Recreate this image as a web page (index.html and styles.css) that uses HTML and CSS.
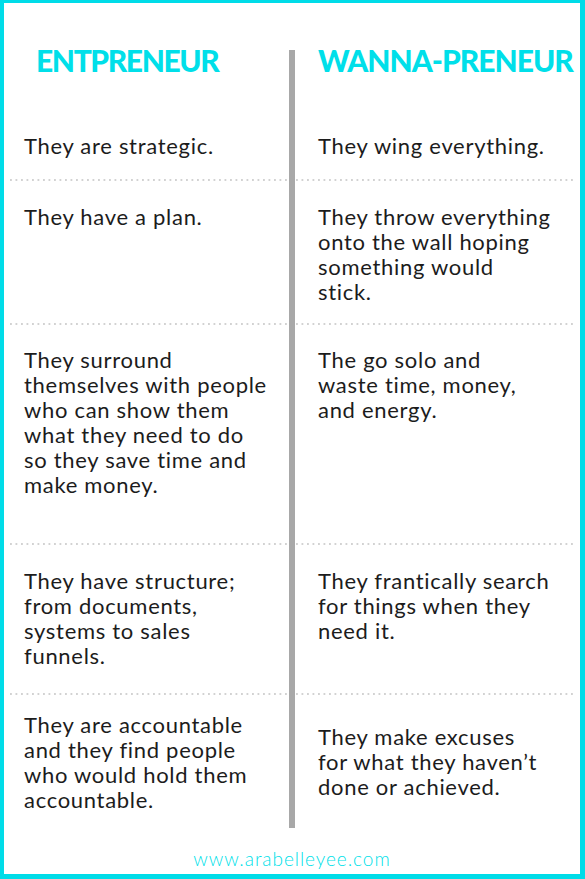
FILE: index.html
```html
<!DOCTYPE html>
<html lang="en">
<head>
<meta charset="utf-8">
<title>Entrepreneur vs Wanna-preneur</title>
<link rel="stylesheet" href="styles.css">
</head>
<body>
<main class="sheet">
  <div class="table">
    <h2 class="heading heading--left">ENTPRENEUR</h2>
    <div class="bar"></div>
    <h2 class="heading heading--right">WANNA-PRENEUR</h2>

    <p class="cell cell--left row1">They are strategic.</p>
    <p class="cell cell--right row1">They wing everything.</p>
    <div class="sep sep1"></div>

    <p class="cell cell--left row2">They have a plan.</p>
    <p class="cell cell--right row2">They throw everything<br>onto the wall hoping<br>something would<br>stick.</p>
    <div class="sep sep2"></div>

    <p class="cell cell--left row3">They surround<br>themselves with people<br>who can show them<br>what they need to do<br>so they save time and<br>make money.</p>
    <p class="cell cell--right row3">The go solo and<br>waste time, money,<br>and energy.</p>
    <div class="sep sep3"></div>

    <p class="cell cell--left row4">They have structure;<br>from documents,<br>systems to sales<br>funnels.</p>
    <p class="cell cell--right row4">They frantically search<br>for things when they<br>need it.</p>
    <div class="sep sep4"></div>

    <p class="cell cell--left row5">They are accountable<br>and they find people<br>who would hold them<br>accountable.</p>
    <p class="cell cell--right row5">They make excuses<br>for what they haven’t<br>done or achieved.</p>
  </div>
  <footer class="footer">www.arabelleyee.com</footer>
</main>
</body>
</html>
```

FILE: styles.css
```css
* { box-sizing: border-box; }
html, body { margin: 0; padding: 0; background: #fff; }
body { width: 585px; height: 879px; }

.sheet {
  width: 585px;
  height: 879px;
  border-style: solid;
  border-color: #00dce8;
  border-width: 3px 5px 5px 4px;
  display: flex;
  flex-direction: column;
  font-family: "Lato", "Noto Sans", sans-serif;
}

.table {
  display: grid;
  grid-template-columns: 285px 6px 285px;
  grid-template-rows: 107px 69px 2px 142px 2px 218px 2px 148px 2px 133px;
}

.bar {
  grid-column: 2;
  grid-row: 1 / 11;
  margin-top: 47px;
  background: #a8a8a8;
  z-index: 1;
}

.heading {
  grid-row: 1;
  margin: 0;
  padding-top: 39px;
  font-family: "Lato", sans-serif;
  font-weight: 900;
  font-size: 30px;
  line-height: 36px;
  letter-spacing: -1px;
  color: #00dfe9;
  white-space: nowrap;
}
.heading--left { grid-column: 1; padding-left: 32px; letter-spacing: -1.4px; }
.heading--right { grid-column: 3; padding-left: 23px; }

.cell {
  margin: 0;
  padding-top: 23px;
  font-size: 22px;
  line-height: 25px;
  letter-spacing: 0.7px;
  color: #1c1c1c;
  white-space: nowrap;
}
.cell--left { grid-column: 1; padding-left: 20px; }
.cell--right { grid-column: 3; padding-left: 23px; }
.row1 { grid-row: 2; }
.row2 { grid-row: 4; }
.row3 { grid-row: 6; padding-top: 22px; }
.row4 { grid-row: 8; }
.row5 { grid-row: 10; padding-top: 0; align-self: center; }

.sep {
  grid-column: 1 / 4;
  margin: 0 7px 0 6px;
  height: 2px;
  background-image: linear-gradient(to right, #d2d2d2 2px, transparent 2px);
  background-size: 5.5px 2px;
}
.sep1 { grid-row: 3; }
.sep2 { grid-row: 5; }
.sep3 { grid-row: 7; }
.sep4 { grid-row: 9; }

.footer {
  flex: 1;
  display: flex;
  align-items: center;
  justify-content: center;
  padding-top: 14px;
  font-size: 19px;
  font-weight: 300;
  letter-spacing: 0.95px;
  color: #00dfe9;
}
```
